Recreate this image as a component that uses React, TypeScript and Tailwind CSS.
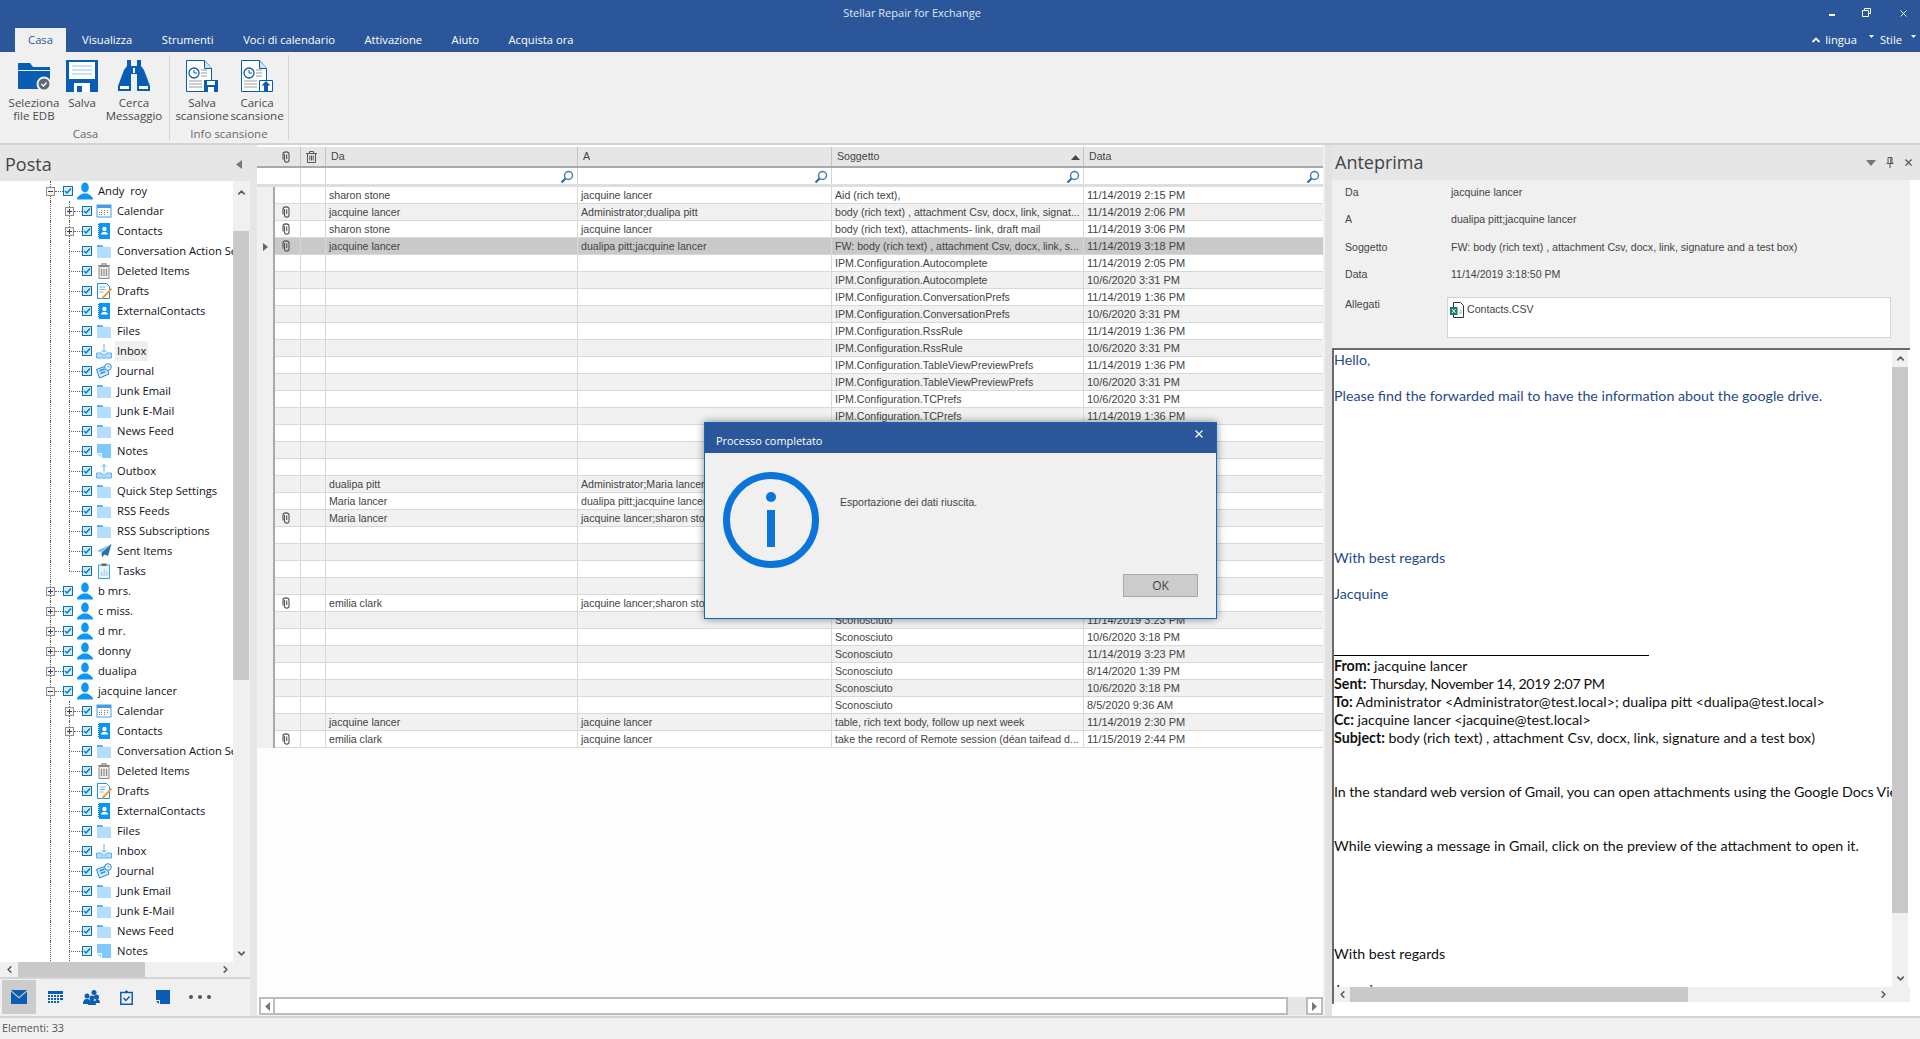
import { ChevronDown, ChevronLeft, ChevronRight, ChevronUp, X } from "lucide-react";
import type { ReactNode } from "react";

const BLUE = "#0a5db5";

type IconKind = "person" | "calendar" | "contacts" | "folder" | "trash" | "drafts" | "inbox" | "journal" | "notes" | "outbox" | "sent" | "tasks";

function TreeIcon({ kind }: { kind: IconKind }) {
  if (kind === "person")
    return (
      <svg width="16" height="18" viewBox="0 0 16 18">
        <ellipse cx="8" cy="5.5" rx="3.8" ry="5" fill="#0c96f5" />
        <path d="M0 17.5c0-3.5 3.5-4.5 5.8-6h4.4c2.300 1.500 5.800 2.500 5.800 6z" fill="#0c96f5" />
      </svg>
    );
  if (kind === "calendar")
    return (
      <svg width="16" height="16" viewBox="0 0 16 16">
        <rect x="1" y="2" width="14" height="12" fill="#fff" stroke="#4a9be0" />
        <rect x="1" y="2" width="14" height="3" fill="#4a9be0" />
        <path d="M5 7h1v1H5zM8 7h1v1H8zM11 7h1v1h-1zM3 9h1v1H3zM5 9h1v1H5zM8 9h1v1H8zM11 9h1v1h-1zM3 11h1v1H3zM5 11h1v1H5zM8 11h1v1H8z" fill="#777" />
      </svg>
    );
  if (kind === "contacts")
    return (
      <svg width="16" height="16" viewBox="0 0 16 16">
        <rect x="3" y="0" width="11" height="16" fill="#0a96f5" />
        <path d="M2 1.500h1M2 3.500h1M2 5.500h1M2 7.500h1M2 9.500h1M2 11.500h1M2 13.500h1" stroke="#0a70c0" />
        <circle cx="8.500" cy="6" r="2.200" fill="#fff" />
        <path d="M5 11.500c0-2 2-2.500 3.500-2.500s3.500.5 3.500 2.500z" fill="#fff" />
      </svg>
    );
  if (kind === "folder")
    return (
      <svg width="16" height="16" viewBox="0 0 16 16">
        <path d="M1 2h5l1.500 2H15v11H1z" fill="#b4dcfd" />
        <path d="M1 2h5l1.500 2H1z" fill="#55b2f7" />
      </svg>
    );
  if (kind === "trash")
    return (
      <svg width="16" height="16" viewBox="0 0 16 16" fill="none" stroke="#8a8a8a">
        <path d="M2 2.500h12M6 2.500V.8h4v1.700" strokeWidth="1.200" />
        <path d="M3 3.500h10v12H3z" fill="#eee" />
        <path d="M5.500 6v7M8 6v7M10.500 6v7" strokeWidth="1.200" />
      </svg>
    );
  if (kind === "drafts")
    return (
      <svg width="16" height="16" viewBox="0 0 16 16">
        <path d="M1.500.5h9l3 3v12h-12z" fill="#fff" stroke="#1c90e6" />
        <path d="M3.500 4h6M3.500 6.500h6M3.500 9h4" stroke="#7cb9e8" />
        <path d="M15 5l1 1.500-8 8.500-2.500 1 1-2.500z" fill="#f09a2a" />
      </svg>
    );
  if (kind === "inbox" || kind === "outbox")
    return (
      <svg width="16" height="16" viewBox="0 0 16 16" fill="none">
        <path d="M.5 10h5l1 2h3l1-2h5v5H.5z" fill="#b4dcfd" stroke="#5cb2f2" />
        {kind === "inbox" ? <path d="M8 1v8M5.500 7L8 9.500 10.500 7" stroke="#5cb2f2" /> : <path d="M8 10V1.500M5.500 4L8 1.500 10.500 4" stroke="#5cb2f2" />}
      </svg>
    );
  if (kind === "journal")
    return (
      <svg width="16" height="16" viewBox="0 0 16 16">
        <path d="M.5 6.500L10 3l3 8-9.500 4z" fill="#d5ecff" stroke="#1c84dc" />
        <path d="M3.500 8l5-2M4.500 10.500l5-2" stroke="#2c90e4" strokeWidth="1.500" />
        <circle cx="12" cy="4" r="3.300" fill="#fff" stroke="#1c84dc" />
        <path d="M12 2.500V4h1.500" stroke="#1c84dc" fill="none" strokeWidth=".8" />
      </svg>
    );
  if (kind === "notes")
    return (
      <svg width="16" height="16" viewBox="0 0 16 16">
        <path d="M1 1h14v14H6V10H1z" fill="#7cc8ff" />
        <path d="M1 11h4v4z" fill="#b4dcfd" />
      </svg>
    );
  if (kind === "sent")
    return (
      <svg width="16" height="16" viewBox="0 0 16 16">
        <path d="M15.500 1L5 9l-4-1z" fill="#6cb8f0" />
        <path d="M15.500 1L5.500 9.500 6 14.500l2.500-3 3.500 1.500z" fill="#2a6fb0" />
      </svg>
    );
  return (
    <svg width="16" height="16" viewBox="0 0 16 16">
      <rect x="2.500" y="2" width="11" height="13.500" fill="#eaf5ff" stroke="#3ba4ef" />
      <rect x="5.500" y="0.500" width="5" height="2.500" fill="#666" />
      <path d="M5 13V9h1.500v4zM7.500 13V6H9v7zM10 13V8h1.500v5z" fill="#a5d4f7" />
    </svg>
  );
}

type TreeRow = { level: 0 | 1; label: string; icon: IconKind; exp?: "+" | "-"; last?: boolean; hover?: boolean };

const folders = (count: number, hover: boolean): TreeRow[] => {
  const all: TreeRow[] = [
    { level: 1, label: "Calendar", icon: "calendar", exp: "+" },
    { level: 1, label: "Contacts", icon: "contacts", exp: "+" },
    { level: 1, label: "Conversation Action Settings", icon: "folder" },
    { level: 1, label: "Deleted Items", icon: "trash" },
    { level: 1, label: "Drafts", icon: "drafts" },
    { level: 1, label: "ExternalContacts", icon: "contacts" },
    { level: 1, label: "Files", icon: "folder" },
    { level: 1, label: "Inbox", icon: "inbox", hover },
    { level: 1, label: "Journal", icon: "journal" },
    { level: 1, label: "Junk Email", icon: "folder" },
    { level: 1, label: "Junk E-Mail", icon: "folder" },
    { level: 1, label: "News Feed", icon: "folder" },
    { level: 1, label: "Notes", icon: "notes" },
    { level: 1, label: "Outbox", icon: "outbox" },
    { level: 1, label: "Quick Step Settings", icon: "folder" },
    { level: 1, label: "RSS Feeds", icon: "folder" },
    { level: 1, label: "RSS Subscriptions", icon: "folder" },
    { level: 1, label: "Sent Items", icon: "sent" },
    { level: 1, label: "Tasks", icon: "tasks", last: true },
  ];
  return all.slice(0, count);
};

const account = (label: string, exp: "+" | "-" = "+"): TreeRow => ({ level: 0, label, icon: "person", exp });

const treeRows: TreeRow[] = [
  account("Andy  roy", "-"),
  ...folders(19, true),
  account("b mrs."),
  account("c miss."),
  account("d mr."),
  account("donny"),
  account("dualipa"),
  account("jacquine lancer", "-"),
  ...folders(13, false),
];

function CheckBox() {
  return (
    <span className="flex h-[10px] w-[10px] shrink-0 items-center justify-center border border-[#0b72b8] bg-[#d6ecfb]">
      <svg width="8" height="8" viewBox="0 0 8 8" fill="none">
        <path d="M1 4l2 2 4-4.500" stroke="#0b72b8" strokeWidth="1.400" />
      </svg>
    </span>
  );
}

function Expander({ sign }: { sign: "+" | "-" }) {
  return (
    <span className="relative z-10 flex h-[9px] w-[9px] shrink-0 items-center justify-center border border-[#8e8e8e] bg-[#f4f4f4]">
      <svg width="7" height="7" viewBox="0 0 7 7">
        <path d={sign === "+" ? "M1 3.500h5M3.500 1v5" : "M1 3.500h5"} stroke="#2d3f6f" />
      </svg>
    </span>
  );
}

function TreeLine({ row }: { row: TreeRow }) {
  return (
    <div className="relative flex h-5 items-center whitespace-pre text-[11.2px] text-[#10101c]">
      <span className="absolute bottom-0 left-[50px] top-0 border-l border-dotted border-[#666]" />
      {row.level === 1 && <span className={`absolute left-[69px] top-0 border-l border-dotted border-[#666] ${row.last ? "h-[10px]" : "h-5"}`} />}
      <span className={row.level === 0 ? "w-[46px] shrink-0" : "w-[65px] shrink-0"} />
      {row.exp ? <Expander sign={row.exp} /> : <span className="w-[9px] shrink-0" />}
      <span className={`w-2 shrink-0 border-t border-dotted border-[#666] ${row.exp ? "" : "relative z-0 -ml-[5px] w-[13px]"}`} />
      <CheckBox />
      <span className="ml-1 flex w-4 shrink-0 justify-center">
        <TreeIcon kind={row.icon} />
      </span>
      <span className={`ml-[3px] flex h-5 items-center px-[2px] ${row.hover ? "bg-[#f0f0f0]" : ""}`}>{row.label}</span>
    </div>
  );
}

function ScrollArrow({ dir }: { dir: "up" | "down" | "left" | "right" }) {
  const Icon = { up: ChevronUp, down: ChevronDown, left: ChevronLeft, right: ChevronRight }[dir];
  return <Icon size={11} strokeWidth={3.5} color="#5a5a5a" />;
}

function Ribbon() {
  return (
    <div className="flex h-[93px] shrink-0 border-b-2 border-[#d4d4d4] bg-[#f0f0f0] pt-[3px] text-[11.5px] leading-[13px] text-[#4a4a4a]">
      <div className="flex h-[85px] w-[170px] flex-col border-r border-[#d4d4d4] pl-[9px] pt-[5px]">
        <div className="flex h-[62px]">
          <RibbonButton width="w-[50px]" label={["Seleziona", "file EDB"]}>
            <svg width="32" height="32" viewBox="0 0 32 32">
              <path d="M0 3h12l3 4h17v3H0z" fill={BLUE} />
              <path d="M0 11h32v18H0z" fill={BLUE} />
              <circle cx="26" cy="24" r="7.500" fill="#f0f0f0" />
              <circle cx="26" cy="24" r="5.500" fill="#5f6b78" />
              <path d="M23.500 24l2 2 3-3.500" stroke="#fff" strokeWidth="1.300" fill="none" />
            </svg>
          </RibbonButton>
          <RibbonButton width="w-[46px]" label={["Salva"]}>
            <svg width="32" height="32" viewBox="0 0 32 32">
              <path d="M0 0h32v32H0z" fill={BLUE} />
              <path d="M3 2h26v17H3z" fill="#fff" />
              <path d="M6 6h20M6 10h20M6 14h20" stroke="#8fc3ee" strokeWidth="1.200" />
              <path d="M8 23h16v9H8z" fill="#fff" />
              <path d="M11 26h5v6h-5z" fill={BLUE} />
            </svg>
          </RibbonButton>
          <RibbonButton width="w-[58px]" label={["Cerca", "Messaggio"]}>
            <svg width="32" height="32" viewBox="0 0 32 32">
              <path d="M9 0h4v6h6V0h4v6l3 4 6 16v5H19V14h-6v17H0v-5l6-16 3-4z" fill={BLUE} />
              <path d="M2 26h9v3H2zM21 26h9v3h-9z" fill="#fff" />
              <path d="M15 8h2v5h-2z" fill="#fff" />
            </svg>
          </RibbonButton>
        </div>
        <div className="mt-[5px] pr-[7px] text-center text-[#6a6a6a]">Casa</div>
      </div>
      <div className="flex h-[85px] w-[119px] flex-col border-r border-[#d4d4d4] pl-[5px] pt-[5px]">
        <div className="flex h-[62px]">
          <RibbonButton width="w-[54px]" label={["Salva", "scansione"]}>
            <ScanDoc>
              <path d="M18 20h14v12H18z" fill={BLUE} />
              <path d="M21 21h8v4h-8z" fill="#fff" />
              <path d="M22 27h6v5h-6z" fill="#fff" />
            </ScanDoc>
          </RibbonButton>
          <RibbonButton width="w-[56px]" label={["Carica", "scansione"]}>
            <ScanDoc>
              <path d="M18.500 20.500h13v11h-13z" fill="#fff" stroke={BLUE} />
              <path d="M25 21l4.500 4.500H27V31h-4v-5.500h-2.500z" fill={BLUE} />
            </ScanDoc>
          </RibbonButton>
        </div>
        <div className="mt-[5px] pr-[5px] text-center text-[#6a6a6a]">Info scansione</div>
      </div>
    </div>
  );
}

function ScanDoc({ children }: { children: ReactNode }) {
  return (
    <svg width="32" height="32" viewBox="0 0 32 32" fill="none">
      <path d="M.5.5h18l7 8v23H.5z" fill="#fff" stroke={BLUE} />
      <path d="M18.500.5v8h7" stroke={BLUE} fill="#cfe4f7" />
      <circle cx="8" cy="13" r="5" stroke={BLUE} strokeWidth="1.300" fill="#fff" />
      <path d="M8 10v3h3" stroke={BLUE} />
      <path d="M15 10h6M15 13h6M15 16h6M3 21h13M3 24h13M3 27h13" stroke="#9a9a9a" />
      {children}
    </svg>
  );
}

function RibbonButton({ width, label, children }: { width: string; label: string[]; children: ReactNode }) {
  return (
    <div className={`flex flex-col items-center ${width}`}>
      <div className="flex h-8 items-center">{children}</div>
      <div className="mt-[4px] whitespace-nowrap text-center">
        {label.map((l) => (
          <div key={l}>{l}</div>
        ))}
      </div>
    </div>
  );
}

function NavBar() {
  return (
    <div className="flex h-[38px] shrink-0 items-center border-t-2 border-[#d4d4d4] pl-[2px]">
      <div className="flex h-[34px] w-[34px] items-center justify-center bg-[#cccccc]">
        <svg width="16" height="14" viewBox="0 0 16 14">
          <path d="M0 0h16L8 7z" fill={BLUE} />
          <path d="M0 1.500V14h16V1.500L8 8.500z" fill={BLUE} />
        </svg>
      </div>
      <div className="ml-[12px] w-[25px]">
        <svg width="15" height="13" viewBox="0 0 15 13" fill={BLUE}>
          <path d="M0 0h15v3H0zM0 4h2v2H0zM3 4h2v2H3zM6 4h2v2H6zM9 4h2v2H9zM12 4h3v2h-3zM0 7h2v2H0zM3 7h2v2H3zM6 7h2v2H6zM9 7h2v2H9zM12 7h3v2h-3zM0 10h2v2H0zM3 10h2v2H3zM6 10h2v2H6zM9 10h2v2H9z" />
        </svg>
      </div>
      <div className="ml-[10px] w-[27px]">
        <svg width="17" height="15" viewBox="0 0 17 15" fill={BLUE}>
          <circle cx="11" cy="2.500" r="2.500" />
          <circle cx="4" cy="6" r="2.500" />
          <circle cx="13.500" cy="7" r="2.500" />
          <circle cx="9" cy="8" r="2.500" />
          <path d="M0 14c0-4 2-5 4-5s4 1 4 5zM5 15c0-4 2-5 4-5s4 1 4 5zM12 13c0-3 1-4 2-4s3 1 3 4z" />
        </svg>
      </div>
      <div className="ml-[10px] w-[26px]">
        <svg width="13" height="15" viewBox="0 0 13 15" fill="none">
          <path d="M.8 2.500h11.400v11.700H.8z" stroke={BLUE} strokeWidth="1.500" />
          <path d="M4.500 2.500L6.500 .5l2 2z" fill={BLUE} stroke={BLUE} />
          <path d="M3.500 8l2.500 2.500 3.500-4" stroke={BLUE} strokeWidth="1.500" />
        </svg>
      </div>
      <div className="ml-[10px] w-[23px]">
        <svg width="14" height="14" viewBox="0 0 14 14">
          <path d="M0 0h14v14H4V10H0z" fill={BLUE} />
          <path d="M0 11h3v3z" fill={BLUE} />
        </svg>
      </div>
      <div className="ml-[10px] flex gap-[5px]">
        <span className="h-[4px] w-[4px] rounded-full bg-[#555]" />
        <span className="h-[4px] w-[4px] rounded-full bg-[#555]" />
        <span className="h-[4px] w-[4px] rounded-full bg-[#555]" />
      </div>
    </div>
  );
}

function FolderPanel() {
  return (
    <div className="flex w-[250px] shrink-0 flex-col">
      <div className="flex h-[36px] shrink-0 items-center justify-between bg-[#e6e6e6] pl-[5px] pr-[8px] pt-[2px] text-[18px] text-[#444]">
        <span>Posta</span>
        <svg width="6" height="9" viewBox="0 0 6 9">
          <path d="M6 0v9L0 4.500z" fill="#777" />
        </svg>
      </div>
      <div className="flex h-[781px] shrink-0 overflow-hidden">
        <div className="w-[233px] shrink-0 overflow-hidden bg-white">
          {treeRows.map((r, i) => (
            <TreeLine key={i} row={r} />
          ))}
        </div>
        <div className="flex w-[16px] shrink-0 flex-col items-center bg-[#f0f0f0]">
          <div className="flex h-[17px] shrink-0 items-end">
            <ScrollArrow dir="up" />
          </div>
          <div className="mt-[33px] h-[449px] w-full shrink-0 bg-[#c9c9c9]" />
          <div className="mt-auto flex h-[17px] shrink-0 items-center">
            <ScrollArrow dir="down" />
          </div>
        </div>
      </div>
      <div className="flex h-[15px] shrink-0 items-center bg-[#f0f0f0]">
        <div className="flex w-[18px] shrink-0 justify-center">
          <ScrollArrow dir="left" />
        </div>
        <div className="h-full w-[127px] shrink-0 bg-[#c9c9c9]" />
        <div className="ml-auto mr-[19px]">
          <ScrollArrow dir="right" />
        </div>
      </div>
      <NavBar />
    </div>
  );
}

type Mail = { clip?: boolean; da?: string; a?: string; subj: string; date: string; sel?: boolean };

const cfg = "IPM.Configuration.";
const unk = "Sconosciuto";
const mails: Mail[] = [
  { da: "sharon stone", a: "jacquine lancer", subj: "Aid (rich text),", date: "11/14/2019 2:15 PM" },
  { clip: true, da: "jacquine lancer", a: "Administrator;dualipa pitt", subj: "body (rich text) , attachment Csv, docx, link, signat...", date: "11/14/2019 2:06 PM" },
  { clip: true, da: "sharon stone", a: "jacquine lancer", subj: "body (rich text), attachments- link, draft mail", date: "11/14/2019 3:06 PM" },
  { clip: true, da: "jacquine lancer", a: "dualipa pitt;jacquine lancer", subj: "FW: body (rich text) , attachment Csv, docx, link, s...", date: "11/14/2019 3:18 PM", sel: true },
  { subj: cfg + "Autocomplete", date: "11/14/2019 2:05 PM" },
  { subj: cfg + "Autocomplete", date: "10/6/2020 3:31 PM" },
  { subj: cfg + "ConversationPrefs", date: "11/14/2019 1:36 PM" },
  { subj: cfg + "ConversationPrefs", date: "10/6/2020 3:31 PM" },
  { subj: cfg + "RssRule", date: "11/14/2019 1:36 PM" },
  { subj: cfg + "RssRule", date: "10/6/2020 3:31 PM" },
  { subj: cfg + "TableViewPreviewPrefs", date: "11/14/2019 1:36 PM" },
  { subj: cfg + "TableViewPreviewPrefs", date: "10/6/2020 3:31 PM" },
  { subj: cfg + "TCPrefs", date: "10/6/2020 3:31 PM" },
  { subj: cfg + "TCPrefs", date: "11/14/2019 1:36 PM" },
  { subj: cfg + "UserInfo", date: "10/6/2020 3:31 PM" },
  { subj: cfg + "UserInfo", date: "11/14/2019 1:36 PM" },
  { subj: cfg + "Owa", date: "10/6/2020 3:31 PM" },
  { da: "dualipa pitt", a: "Administrator;Maria lancer", subj: "body", date: "11/14/2019 2:10 PM" },
  { da: "Maria lancer", a: "dualipa pitt;jacquine lancer", subj: "body", date: "11/14/2019 2:12 PM" },
  { clip: true, da: "Maria lancer", a: "jacquine lancer;sharon stone", subj: "body", date: "11/14/2019 2:20 PM" },
  { subj: unk, date: "11/14/2019 3:23 PM" },
  { subj: unk, date: "10/6/2020 3:18 PM" },
  { subj: unk, date: "11/14/2019 3:23 PM" },
  { subj: unk, date: "10/6/2020 3:18 PM" },
  { clip: true, da: "emilia clark", a: "jacquine lancer;sharon stone", subj: "body", date: "11/14/2019 2:25 PM" },
  { subj: unk, date: "11/14/2019 3:23 PM" },
  { subj: unk, date: "10/6/2020 3:18 PM" },
  { subj: unk, date: "11/14/2019 3:23 PM" },
  { subj: unk, date: "8/14/2020 1:39 PM" },
  { subj: unk, date: "10/6/2020 3:18 PM" },
  { subj: unk, date: "8/5/2020 9:36 AM" },
  { da: "jacquine lancer", a: "jacquine lancer", subj: "table, rich text body, follow up next week", date: "11/14/2019 2:30 PM" },
  { clip: true, da: "emilia clark", a: "jacquine lancer", subj: "take the record of Remote session (déan taifead d...", date: "11/15/2019 2:44 PM" },
];

const COLS = "grid-cols-[18px_26px_25px_252px_254px_252px_239px]";

function Clip() {
  return (
    <svg width="8" height="12" viewBox="0 0 8 12" fill="none" stroke="#555" strokeWidth="1.100">
      <path d="M2.500 3v6c0 2.800 4.500 2.800 4.500 0V3C7 .2 1 .2 1 3v5.500" />
      <path d="M4.700 3.500V8" />
    </svg>
  );
}

function Lens() {
  return (
    <svg className="absolute right-[3px] top-[2px]" width="14" height="14" viewBox="0 0 14 14" fill="none">
      <circle cx="8.500" cy="5.500" r="4" stroke="#4a7db5" strokeWidth="1.500" />
      <path d="M5.500 8.500L1.500 12.500" stroke="#2f6aa8" strokeWidth="2.200" />
    </svg>
  );
}

function MailGrid() {
  const headCell = "flex items-center border-r border-[#c4c4c4] pt-px";
  const filterCell = "relative border-r border-[#d4d4d4]";
  return (
    <div className="flex w-[1066px] shrink-0 flex-col bg-[#fdfdfd] pt-[2px] font-['Liberation_Sans',sans-serif] text-[10.6px] text-[#444]">
      <div className={`grid h-[21px] shrink-0 border-b-2 border-[#a9a9a9] bg-[#e6e6e6] ${COLS}`}>
        <div />
        <div className={`${headCell} justify-center pr-[4px]`}>
          <Clip />
        </div>
        <div className={`${headCell} justify-center pr-[4px]`}>
          <svg width="11" height="12" viewBox="0 0 11 12" fill="none" stroke="#555">
            <path d="M0 2.500h11M3.500 2.500V.5h4v2M1.500 3v8.500h8V3M3.800 4.500v5M5.500 4.500v5M7.200 4.500v5" />
          </svg>
        </div>
        <div className={`${headCell} pl-[5px]`}>Da</div>
        <div className={`${headCell} pl-[5px]`}>A</div>
        <div className={`${headCell} justify-between pl-[5px] pr-[3px]`}>
          <span>Soggetto</span>
          <svg width="9" height="5" viewBox="0 0 9 5">
            <path d="M4.500 0L9 5H0z" fill="#444" />
          </svg>
        </div>
        <div className="flex items-center pl-[5px] pt-px">Data</div>
      </div>
      <div className={`grid h-[19px] shrink-0 border-b-[3px] border-[#dedede] bg-white ${COLS}`}>
        <div />
        <div className={filterCell} />
        <div className={filterCell} />
        <div className={filterCell}>
          <Lens />
        </div>
        <div className={filterCell}>
          <Lens />
        </div>
        <div className={filterCell}>
          <Lens />
        </div>
        <div className="relative">
          <Lens />
        </div>
      </div>
      <div className="shrink-0">
        {mails.map((m, i) => {
          const bg = m.sel ? "bg-[#c9c9c9]" : i % 2 === 1 ? "bg-[#f1f1f1]" : "bg-white";
          const cell = "flex items-center overflow-hidden whitespace-nowrap border-r border-[#d8d8d8] pl-[3px] pt-px";
          return (
            <div key={i} className={`grid h-[17px] ${COLS}`}>
              <div className="flex items-center justify-center border-r-2 border-[#a9a9a9] bg-[#f0f0f0]">
                {m.sel && (
                  <svg width="5" height="8" viewBox="0 0 5 8">
                    <path d="M0 0l5 4-5 4z" fill="#666" />
                  </svg>
                )}
              </div>
              <div className={`${bg} flex items-center justify-center border-b border-r border-[#d8d8d8] pr-[4px]`}>{m.clip && <Clip />}</div>
              <div className={`${bg} border-b border-r border-[#d8d8d8]`} />
              <div className={`${bg} ${cell} border-b`}>{m.da}</div>
              <div className={`${bg} ${cell} border-b`}>{m.a}</div>
              <div className={`${bg} ${cell} border-b`}>{m.subj}</div>
              <div className={`${bg} ${cell} border-b border-r-0 text-[11px]`}>{m.date}</div>
            </div>
          );
        })}
      </div>
      <div className="flex-1" />
      <div className="flex h-[18px] shrink-0 items-stretch pl-[2px]">
        <div className="flex w-4 shrink-0 items-center justify-center border-2 border-[#bcbcbc] bg-white">
          <svg width="5" height="9" viewBox="0 0 5 9">
            <path d="M5 0v9L0 4.500z" fill="#777" />
          </svg>
        </div>
        <div className="w-[1013px] shrink-0 border-2 border-l-0 border-[#bcbcbc] bg-white" />
        <div className="flex-1 bg-[#e6e6e6]" />
        <div className="flex w-[17px] shrink-0 items-center justify-center border-2 border-[#bcbcbc] bg-white">
          <svg width="5" height="9" viewBox="0 0 5 9">
            <path d="M0 0v9l5-4.500z" fill="#777" />
          </svg>
        </div>
      </div>
      <div className="h-[1px] shrink-0 bg-[#f0f0f0]" />
    </div>
  );
}

const BLU = "text-[#1f4a8c]";

type Line = { text?: ReactNode; color?: string; rule?: boolean };

const emailLines: Line[] = [
  { text: "Hello,", color: BLU },
  {},
  { text: "Please find the forwarded mail to have the information about the google drive.", color: BLU },
  {},
  {},
  {},
  {},
  {},
  {},
  {},
  {},
  { text: "With best regards", color: BLU },
  {},
  { text: "Jacquine", color: BLU },
  {},
  {},
  { rule: true },
  { text: <><b>From:</b> jacquine lancer</> },
  { text: <><b>Sent:</b> <span className="tracking-[-0.35px]">Thursday, November 14, 2019 2:07 PM</span></> },
  { text: <><b>To:</b> Administrator &lt;Administrator@test.local&gt;; dualipa pitt &lt;dualipa@test.local&gt;</> },
  { text: <><b>Cc:</b> jacquine lancer &lt;jacquine@test.local&gt;</> },
  { text: <><b>Subject:</b> body (rich text) , attachment Csv, docx, link, signature and a test box)</> },
  {},
  {},
  { text: <span className="tracking-[-0.06px]">In the standard web version of Gmail, you can open attachments using the Google Docs Viewer.</span> },
  {},
  {},
  { text: "While viewing a message in Gmail, click on the preview of the attachment to open it." },
  {},
  {},
  {},
  {},
  {},
  { text: "With best regards" },
  {},
  { text: "Jacquine" },
];

function PreviewPanel() {
  const rows = [
    { k: "Da", v: "jacquine lancer", h: "h-[25px]" },
    { k: "A", v: "dualipa pitt;jacquine lancer", h: "h-[29px]" },
    { k: "Soggetto", v: "FW: body (rich text) , attachment Csv, docx, link, signature and a test box)", h: "h-[27px]" },
    { k: "Data", v: "11/14/2019 3:18:50 PM", h: "h-[28px]" },
  ];
  return (
    <div className="flex min-w-0 flex-1 flex-col bg-white">
      <div className="flex h-[35px] shrink-0 items-center bg-[#e6e6e6] pl-[3px] pr-[6px] text-[18px] text-[#444]">
        <span>Anteprima</span>
        <svg className="ml-auto" width="10" height="6" viewBox="0 0 10 6">
          <path d="M0 0h10L5 6z" fill="#777" />
        </svg>
        <svg className="ml-[10px]" width="8" height="11" viewBox="0 0 8 11" fill="none" stroke="#555">
          <path d="M2 .5h4v6H2zM.5 6.500h7M4 7v4M4.800 1v5" />
        </svg>
        <X className="ml-[9px]" size={11} strokeWidth={2.500} color="#555" />
      </div>
      <div className="mr-[10px] flex flex-col bg-[#f0f0f0]">
        <div className="h-[168px] shrink-0 pl-[13px] font-['Liberation_Sans',sans-serif] text-[10.6px] text-[#444]">
          {rows.map((r) => (
            <div key={r.k} className={`flex items-center ${r.h}`}>
              <span className="w-[106px]">{r.k}</span>
              <span>{r.v}</span>
            </div>
          ))}
          <div className="mt-[8px] flex">
            <span className="w-[102px]">Allegati</span>
            <div className="flex h-[41px] w-[444px] items-start border border-[#d4d4d4] bg-white pl-[2px] pt-[4px]">
              <svg width="14" height="16" viewBox="0 0 14 16">
                <path d="M3.500.5h7l3 3v12h-10z" fill="#fff" stroke="#333" />
                <path d="M0 5h7.500v8H0z" fill="#1a7a6d" />
                <path d="M2 7l3.500 4M5.500 7L2 11" stroke="#fff" />
                <path d="M9 11h3M10 9h2" stroke="#9ab" />
              </svg>
              <span className="ml-[3px]">Contacts.CSV</span>
            </div>
          </div>
        </div>
        <div className="flex h-[656px] shrink-0 flex-col border-l-2 border-t-2 border-[#6a6a6a] bg-white">
          <div className="flex h-[637px] shrink-0">
            <div className="w-[558px] shrink-0 overflow-hidden whitespace-nowrap pt-[1px] font-['Lato',sans-serif] text-[14.25px] leading-[18px] text-[#111]">
              {emailLines.map((l, i) => (
                <div key={i} className={`h-[18px] ${l.color ?? ""}`}>
                  {l.rule ? <div className="h-[17px] w-[315px] border-b border-black" /> : l.text}
                </div>
              ))}
            </div>
            <div className="flex w-[16px] shrink-0 flex-col items-center bg-[#f0f0f0]">
              <div className="flex h-[17px] shrink-0 items-center">
                <ScrollArrow dir="up" />
              </div>
              <div className="h-[546px] w-full shrink-0 bg-[#c9c9c9]" />
              <div className="mt-auto flex h-[17px] shrink-0 items-center">
                <ScrollArrow dir="down" />
              </div>
            </div>
          </div>
          <div className="flex h-[15px] shrink-0 items-center bg-[#f0f0f0]">
            <div className="flex w-[16px] shrink-0 justify-center">
              <ScrollArrow dir="left" />
            </div>
            <div className="h-full w-[338px] shrink-0 bg-[#c9c9c9]" />
            <div className="ml-auto mr-[21px]">
              <ScrollArrow dir="right" />
            </div>
          </div>
        </div>
      </div>
    </div>
  );
}

function DoneDialog() {
  return (
    <div className="absolute left-[704px] top-[422px] flex h-[197px] w-[513px] flex-col border border-[#1068c0] bg-[#f0f0f0] shadow-[0_0_8px_rgba(0,0,0,0.45)]">
      <div className="flex h-[30px] shrink-0 items-start justify-between bg-[#2b579a] pl-[11px] pr-[11px] text-[10.9px] text-white">
        <span className="mt-[10px]">Processo completato</span>
        <X className="mt-[5px]" size={12} strokeWidth={2.500} color="#fff" />
      </div>
      <div className="relative flex flex-1 pl-[18px] pt-[19px]">
        <svg width="96" height="96" viewBox="0 0 96 96" fill="none">
          <circle cx="48" cy="48" r="44.500" stroke="#0a74da" strokeWidth="7" />
          <circle cx="48" cy="25" r="5" fill="#0a74da" />
          <rect x="44" y="38" width="8" height="37" fill="#0a74da" />
        </svg>
        <span className="ml-[21px] mt-[23px] font-['Liberation_Sans',sans-serif] text-[10.5px] text-[#444]">Esportazione dei dati riuscita.</span>
        <button className="absolute right-[18px] top-[121px] h-[23px] w-[75px] border border-[#a8a8a8] bg-[#cccccc] text-[12px] text-[#444]">OK</button>
      </div>
    </div>
  );
}

export default function App() {
  const tabs = ["Visualizza", "Strumenti", "Voci di calendario", "Attivazione", "Aiuto", "Acquista ora"];
  return (
    <div className="relative flex h-[1039px] w-[1920px] flex-col overflow-hidden bg-[#f0f0f0] font-['Open_Sans',sans-serif]">
      {/* Title bar */}
      <div className="relative flex h-[28px] shrink-0 items-center justify-center bg-[#2b579a] text-[11px] text-[#dfe7f3]">
        <span className="-mt-[2px] ml-[-96px]">Stellar Repair for Exchange</span>
        <div className="absolute right-[11px] top-[8px] flex items-start gap-[27px]">
          <span className="mt-[6px] h-[2px] w-[6px] bg-white" />
          <svg width="9" height="9" viewBox="0 0 9 9" fill="none" stroke="#fff">
            <path d="M2.500 2.500V.5h6v5h-2M.5 2.500h6v6h-6z" />
          </svg>
          <X size={11} strokeWidth={2} color="#fff" />
        </div>
      </div>
      {/* Tabs */}
      <div className="flex h-[24px] shrink-0 items-end bg-[#2b579a] pl-[15px] text-[11.2px] text-white">
        <div className="flex h-full w-[51px] items-center justify-center bg-[#f0f0f0] text-[#2b579a]">Casa</div>
        <div className="ml-[16px] flex h-full items-center gap-[29.5px]">
          {tabs.map((t) => (
            <span key={t} className="whitespace-nowrap">
              {t}
            </span>
          ))}
        </div>
        <div className="ml-auto flex h-full items-center pr-[4px]">
          <svg width="8" height="6" viewBox="0 0 8 6" fill="none">
            <path d="M.5 5L4 1.500 7.500 5" stroke="#fff" strokeWidth="1.800" />
          </svg>
          <span className="ml-[5px]">lingua</span>
          <svg className="mb-[8px] ml-[12px]" width="5" height="3" viewBox="0 0 5 3">
            <path d="M0 0h5L2.500 3z" fill="#fff" />
          </svg>
          <span className="ml-[6px]">Stile</span>
          <svg className="mb-[8px] ml-[9px]" width="5" height="3" viewBox="0 0 5 3">
            <path d="M0 0h5L2.500 3z" fill="#fff" />
          </svg>
        </div>
      </div>
      <Ribbon />
      {/* Main panes */}
      <div className="flex h-[871px] shrink-0">
        <FolderPanel />
        <div className="w-[7px] shrink-0 bg-[#e6e6e6]" />
        <MailGrid />
        <div className="w-[9px] shrink-0 border-l-2 border-[#f0f0f0] bg-[#e2e2e2]" />
        <PreviewPanel />
      </div>
      {/* Status bar */}
      <div className="flex flex-1 items-center border-t-2 border-[#d4d4d4] pl-[2px] text-[10.8px] text-[#555]">Elementi: 33</div>
      <DoneDialog />
    </div>
  );
}
